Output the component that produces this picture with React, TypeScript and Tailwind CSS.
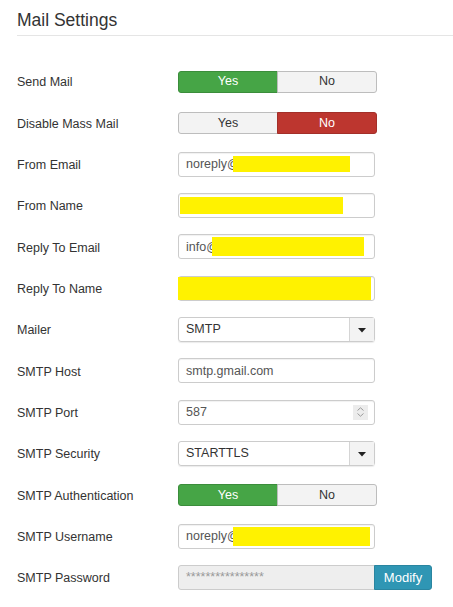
import React from "react";

const font = { fontFamily: '"Liberation Sans", Arial, sans-serif' };

type Row = { label: string; control: React.ReactNode };

const Toggle = ({ value, red }: { value: "yes" | "no"; red?: boolean }) => {
  return (
    <div className="flex h-[22px] w-[200px] text-[12.5px]">
      <div
        className={`flex w-1/2 items-center justify-center rounded-l-[3px] border ${
          value === "yes"
            ? "border-[#3b8d3b] bg-[#46a546] text-white"
            : "border-[#bdbdbd] bg-[#f3f3f3] text-[#333]"
        }`}
      >
        Yes
      </div>
      <div
        className={`-ml-px flex w-1/2 items-center justify-center rounded-r-[3px] border ${
          value === "no" && red
            ? "border-[#a32f29] bg-[#bd362f] text-white"
            : "border-[#bdbdbd] bg-[#f3f3f3] text-[#333]"
        }`}
      >
        No
      </div>
    </div>
  );
};

const Input = ({ children, className = "" }: { children?: React.ReactNode; className?: string }) => (
  <div
    className={`flex h-[25px] w-[197px] items-center rounded-[3px] border border-[#cccccc] text-[12.5px] text-[#555] shadow-[inset_0_1px_1px_rgba(0,0,0,0.06)] ${className}`}
  >
    {children}
  </div>
);

const Select = ({ value }: { value: string }) => (
  <div className="flex h-[25px] w-[197px] items-stretch rounded-[3px] border border-[#cccccc] text-[12.5px] text-[#333] shadow-[0_1px_1px_rgba(0,0,0,0.08)]">
    <div className="flex flex-1 items-center pl-[7px]">{value}</div>
    <div className="flex w-[25px] items-center justify-center border-l border-[#d5d5d5] bg-[#f3f3f3]">
      <svg width="8" height="5" viewBox="0 0 8 5" className="mt-[2px]">
        <path d="M0 0 L8 0 L4 4.5 Z" fill="#222" />
      </svg>
    </div>
  </div>
);

// redaction block, laid over the end of the field text
const Yellow = ({ className }: { className: string }) => <span className={`block shrink-0 bg-[#fff200] ${className}`} />;

export default function App() {
  const rows: Row[] = [
    { label: "Send Mail", control: <Toggle value="yes" /> },
    { label: "Disable Mass Mail", control: <Toggle value="no" red /> },
    {
      label: "From Email",
      control: (
        <Input className="pl-[7px]">
          <span>noreply@</span>
          <Yellow className="-ml-[7px] h-[16px] w-[117px]" />
        </Input>
      ),
    },
    {
      label: "From Name",
      control: (
        <Input className="pl-px">
          <Yellow className="h-[17px] w-[163px]" />
        </Input>
      ),
    },
    {
      label: "Reply To Email",
      control: (
        <Input className="pl-[7px]">
          <span>info@</span>
          <Yellow className="-ml-[7px] h-[19px] w-[152px]" />
        </Input>
      ),
    },
    {
      label: "Reply To Name",
      control: (
        <Input className="items-end">
          <Yellow className="-ml-px h-[23px] w-[193px]" />
        </Input>
      ),
    },
    { label: "Mailer", control: <Select value="SMTP" /> },
    {
      label: "SMTP Host",
      control: <Input className="pl-[7px]">smtp.gmail.com</Input>,
    },
    {
      label: "SMTP Port",
      control: (
        <Input className="justify-between pl-[7px] pr-[6px]">
          <span>587</span>
          <span className="flex h-[15px] w-[15px] flex-col items-center justify-center gap-[2px] bg-[#ececec]">
            <svg width="7" height="4" viewBox="0 0 7 4">
              <path d="M0.5 3.5 L3.5 0.8 L6.5 3.5" fill="none" stroke="#9a9a9a" strokeWidth="1" />
            </svg>
            <svg width="7" height="4" viewBox="0 0 7 4">
              <path d="M0.5 0.5 L3.5 3.2 L6.5 0.5" fill="none" stroke="#9a9a9a" strokeWidth="1" />
            </svg>
          </span>
        </Input>
      ),
    },
    { label: "SMTP Security", control: <Select value="STARTTLS" /> },
    { label: "SMTP Authentication", control: <Toggle value="yes" /> },
    {
      label: "SMTP Username",
      control: (
        <Input className="pl-[7px]">
          <span>noreply@</span>
          <Yellow className="-ml-[7px] h-[19px] w-[137px]" />
        </Input>
      ),
    },
    {
      label: "SMTP Password",
      control: (
        <div className="flex h-[25px] text-[12.5px]">
          <div className="flex w-[197px] items-center rounded-l-[3px] border border-[#cccccc] bg-[#eeeeee] pl-[7px] text-[#999]">
            ****************
          </div>
          <button className="-ml-px flex w-[58px] items-center justify-center rounded-r-[3px] border border-[#2a85a0] bg-[#2f96b4] text-[13px] text-white">
            Modify
          </button>
        </div>
      ),
    },
  ];

  return (
    <div className="min-h-[607px] w-[453px] bg-white pl-[17px] text-[#333]" style={font}>
      <h2 className="border-b border-[#e5e5e5] pt-[10px] pb-[5px] text-[17.5px] leading-[20px] font-normal">
        Mail Settings
      </h2>
      <div className="mt-[25px] flex flex-col">
        {rows.map((row) => (
          <div key={row.label} className="flex h-[41.33px] items-center">
            <div className="mt-[2px] w-[161px] text-[12.5px]">{row.label}</div>
            {row.control}
          </div>
        ))}
      </div>
    </div>
  );
}
